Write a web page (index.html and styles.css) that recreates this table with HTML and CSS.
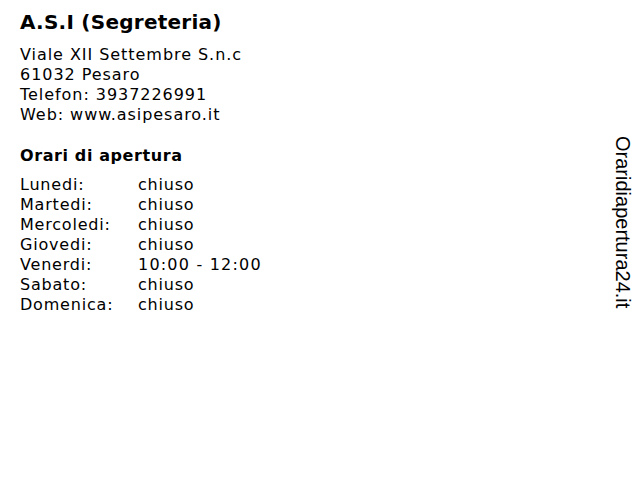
FILE: index.html
```html
<!DOCTYPE html>
<html>
<head>
<meta charset="utf-8">
<link rel="stylesheet" href="styles.css">
</head>
<body>
<div class="page">
  <h1 class="title">A.S.I (Segreteria)</h1>
  <div class="address">
    <div>Viale XII Settembre S.n.c</div>
    <div>61032 Pesaro</div>
    <div>Telefon: 3937226991</div>
    <div>Web: www.asipesaro.it</div>
  </div>
  <h2 class="subtitle">Orari di apertura</h2>
  <div class="hours">
    <span>Lunedi:</span><span>chiuso</span>
    <span>Martedi:</span><span>chiuso</span>
    <span>Mercoledi:</span><span>chiuso</span>
    <span>Giovedi:</span><span>chiuso</span>
    <span>Venerdi:</span><span class="wide">10:00 - 12:00</span>
    <span>Sabato:</span><span>chiuso</span>
    <span>Domenica:</span><span>chiuso</span>
  </div>
</div>
<div class="brand">Oraridiapertura24.it</div>
</body>
</html>
```
FILE: styles.css
```css
html, body {
  margin: 0;
  padding: 0;
  background: #fff;
}
body {
  font-family: "DejaVu Sans", Verdana, sans-serif;
  color: #000;
}
.page {
  padding: 10px 20px;
}
.title {
  font-size: 20px;
  font-weight: bold;
  line-height: 24px;
  letter-spacing: 0.25px;
  margin: 0 0 11px 0;
}
.address {
  font-size: 16px;
  line-height: 20px;
  letter-spacing: 0.95px;
}
.subtitle {
  font-size: 16px;
  font-weight: bold;
  line-height: 20px;
  letter-spacing: 0.6px;
  margin: 21px 0 9px 0;
}
.hours {
  display: grid;
  grid-template-columns: 118px auto;
  font-size: 16px;
  line-height: 20px;
  letter-spacing: 0.8px;
}
.hours .wide {
  letter-spacing: 1.2px;
}
.brand {
  position: absolute;
  top: 136px;
  right: 7px;
  writing-mode: vertical-rl;
  font-family: "Liberation Sans", Arial, sans-serif;
  font-size: 20px;
  line-height: 20px;
}
```
